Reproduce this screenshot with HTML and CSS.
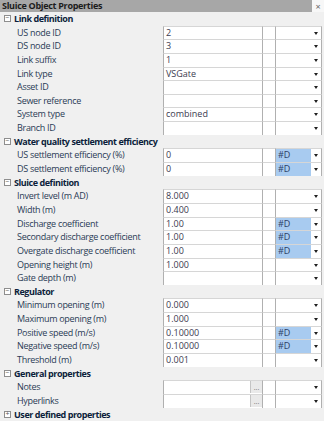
FILE: index.html
```html
<!DOCTYPE html>
<html>
    <head>
        <meta name="viewport" content="width=device-width, initial-scale=1.0">
        <meta charset="utf-8">
        <title>Sluice Object Properties</title>
        <link rel="stylesheet" href="styles.css">
    </head>
    <body>
        <div class="panel">
            <div class="titlebar">
                <span class="title">Sluice Object Properties</span>
                <span class="close">&times;</span>
            </div>
            <div class="grid">
                <div class="section"><span class="toggle">&minus;</span>Link definition</div>
                <div class="row"><div class="label">US node ID</div><div class="val">2</div><div class="flag"></div><div class="combo"><span class="unit"></span><span class="arrow"></span></div></div>
                <div class="row"><div class="label">DS node ID</div><div class="val">3</div><div class="flag"></div><div class="combo"><span class="unit"></span><span class="arrow"></span></div></div>
                <div class="row"><div class="label">Link suffix</div><div class="val">1</div><div class="flag"></div><div class="combo"><span class="unit"></span><span class="arrow"></span></div></div>
                <div class="row"><div class="label">Link type</div><div class="val">VSGate</div><div class="flag"></div><div class="combo"><span class="unit"></span><span class="arrow"></span></div></div>
                <div class="row"><div class="label">Asset ID</div><div class="val"></div><div class="flag"></div><div class="combo"><span class="unit"></span><span class="arrow"></span></div></div>
                <div class="row"><div class="label">Sewer reference</div><div class="val"></div><div class="flag"></div><div class="combo"><span class="unit"></span><span class="arrow"></span></div></div>
                <div class="row"><div class="label">System type</div><div class="val">combined</div><div class="flag"></div><div class="combo"><span class="unit"></span><span class="arrow"></span></div></div>
                <div class="row"><div class="label">Branch ID</div><div class="val"></div><div class="flag"></div><div class="combo"><span class="unit"></span><span class="arrow"></span></div></div>

                <div class="section"><span class="toggle">&minus;</span>Water quality settlement efficiency</div>
                <div class="row"><div class="label">US settlement efficiency (%)</div><div class="val">0</div><div class="flag"></div><div class="combo"><span class="unit default">#D</span><span class="arrow"></span></div></div>
                <div class="row"><div class="label">DS settlement efficiency (%)</div><div class="val">0</div><div class="flag"></div><div class="combo"><span class="unit default">#D</span><span class="arrow"></span></div></div>

                <div class="section"><span class="toggle">&minus;</span>Sluice definition</div>
                <div class="row"><div class="label">Invert level (m AD)</div><div class="val">8.000</div><div class="flag"></div><div class="combo"><span class="unit"></span><span class="arrow"></span></div></div>
                <div class="row"><div class="label">Width (m)</div><div class="val">0.400</div><div class="flag"></div><div class="combo"><span class="unit"></span><span class="arrow"></span></div></div>
                <div class="row"><div class="label">Discharge coefficient</div><div class="val">1.00</div><div class="flag"></div><div class="combo"><span class="unit default">#D</span><span class="arrow"></span></div></div>
                <div class="row"><div class="label">Secondary discharge coefficient</div><div class="val">1.00</div><div class="flag"></div><div class="combo"><span class="unit default">#D</span><span class="arrow"></span></div></div>
                <div class="row"><div class="label">Overgate discharge coefficient</div><div class="val">1.00</div><div class="flag"></div><div class="combo"><span class="unit default">#D</span><span class="arrow"></span></div></div>
                <div class="row"><div class="label">Opening height (m)</div><div class="val">1.000</div><div class="flag"></div><div class="combo"><span class="unit"></span><span class="arrow"></span></div></div>
                <div class="row"><div class="label">Gate depth (m)</div><div class="val"></div><div class="flag"></div><div class="combo"><span class="unit"></span><span class="arrow"></span></div></div>

                <div class="section"><span class="toggle">&minus;</span>Regulator</div>
                <div class="row"><div class="label">Minimum opening (m)</div><div class="val">0.000</div><div class="flag"></div><div class="combo"><span class="unit"></span><span class="arrow"></span></div></div>
                <div class="row"><div class="label">Maximum opening (m)</div><div class="val">1.000</div><div class="flag"></div><div class="combo"><span class="unit"></span><span class="arrow"></span></div></div>
                <div class="row"><div class="label">Positive speed (m/s)</div><div class="val">0.10000</div><div class="flag"></div><div class="combo"><span class="unit default">#D</span><span class="arrow"></span></div></div>
                <div class="row"><div class="label">Negative speed (m/s)</div><div class="val">0.10000</div><div class="flag"></div><div class="combo"><span class="unit default">#D</span><span class="arrow"></span></div></div>
                <div class="row"><div class="label">Threshold (m)</div><div class="val">0.001</div><div class="flag"></div><div class="combo"><span class="unit"></span><span class="arrow"></span></div></div>

                <div class="section"><span class="toggle">&minus;</span>General properties</div>
                <div class="row"><div class="label">Notes</div><div class="val"><span class="more">...</span></div><div class="flag"></div><div class="combo"><span class="unit"></span><span class="arrow"></span></div></div>
                <div class="row"><div class="label">Hyperlinks</div><div class="val"><span class="more">...</span></div><div class="flag"></div><div class="combo"><span class="unit"></span><span class="arrow"></span></div></div>

                <div class="section"><span class="toggle">+</span>User defined properties</div>
            </div>
        </div>
    </body>
</html>
```

FILE: styles.css
```css
body {
    margin: 0;
    background-color: #f0f0f0;
    font-family: "Open Sans", "DejaVu Sans", sans-serif;
    font-size: 9px;
    color: #2a3b55;
}

.panel {
    width: 324px;
    height: 421px;
    overflow: hidden;
}

.titlebar {
    display: flex;
    height: 12px;
}

.title {
    flex: 1;
    background-color: #a7a7a7;
    color: #1c1c1c;
    font-weight: bold;
    line-height: 12px;
    padding-left: 2px;
    letter-spacing: -0.3px;
}

.close {
    width: 12px;
    background-color: #f7f7f7;
    color: #666666;
    font-size: 9px;
    line-height: 14px;
    text-align: center;
}

.grid {
    padding-right: 2px;
}

.section {
    display: flex;
    align-items: center;
    height: 13.65px;
    font-weight: bold;
    color: #0c1e3b;
    letter-spacing: -0.45px;
}

.toggle {
    box-sizing: border-box;
    width: 7px;
    height: 7px;
    margin: 0 3px 0 4px;
    border: 1px solid #8e8e8e;
    background-color: #ffffff;
    color: #555555;
    font-size: 7px;
    line-height: 4px;
    text-align: center;
    font-weight: normal;
    letter-spacing: 0;
}

.row {
    display: flex;
    height: 13.65px;
}

.label {
    width: 146px;
    padding-left: 17px;
    line-height: 13.65px;
    white-space: nowrap;
    overflow: hidden;
    letter-spacing: -0.3px;
}

.val, .flag, .combo {
    box-sizing: border-box;
    height: 13.65px;
    background-color: #ffffff;
    border-top: 1px solid #d6d6d6;
    border-left: 1px solid #b0b0b0;
    line-height: 12px;
    color: #3b3b4f;
}

.val {
    position: relative;
    width: 99px;
    padding-left: 2px;
}

.flag {
    width: 13px;
}

.combo {
    flex: 1;
    display: flex;
    border-right: 1px solid #b0b0b0;
}

.unit {
    width: 33px;
    padding-left: 2px;
    color: #2c3f66;
}

.unit.default {
    background-color: #a8cbf0;
}

.arrow {
    flex: 1;
    position: relative;
}

.arrow::after {
    content: "";
    position: absolute;
    left: 3px;
    top: 5px;
    border-left: 2.5px solid transparent;
    border-right: 2.5px solid transparent;
    border-top: 3px solid #202020;
}

.more {
    position: absolute;
    right: 0;
    top: 0;
    box-sizing: border-box;
    width: 12px;
    height: 12px;
    background-color: #e9e9e9;
    border-left: 1px solid #c4c4c4;
    color: #707070;
    font-size: 7px;
    line-height: 14px;
    text-align: center;
}
```
